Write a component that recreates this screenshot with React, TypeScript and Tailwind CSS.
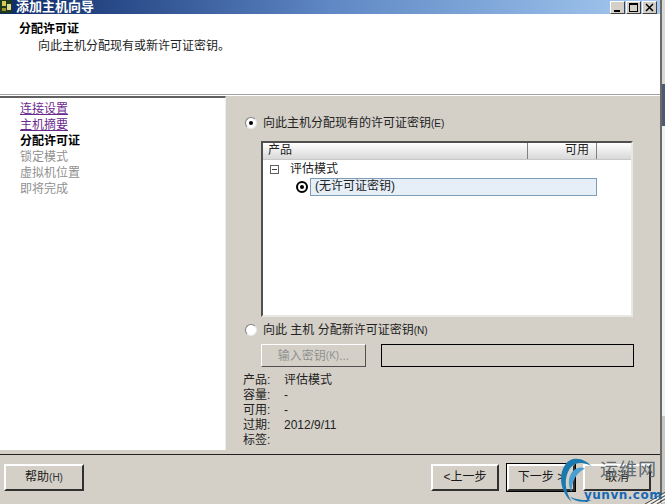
const font = "font-['Liberation_Sans','Noto_Sans_CJK_SC',sans-serif]";

function WinButton({ children }: { children: React.ReactNode }) {
  return (
    <div className="w-[15px] h-[13px] flex items-center justify-center bg-[#d4d0c8] border border-t-white border-l-white border-r-[#404040] border-b-[#404040]">
      {children}
    </div>
  );
}

function Radio({ checked }: { checked?: boolean }) {
  return (
    <span className="w-[12px] h-[12px] rounded-full bg-white border border-[#808080] border-r-[#e8e8e8] border-b-[#e8e8e8] flex items-center justify-center">
      {checked && <span className="w-[4px] h-[4px] rounded-full bg-black" />}
    </span>
  );
}

function Button({ label, hotkey, className }: { label: string; hotkey?: string; className: string }) {
  return (
    <div className={`h-[27px] flex items-center justify-center text-[12px] text-[#1a1a1a] bg-[#d4d0c8] border-2 border-t-white border-l-white border-r-[#303030] border-b-[#303030] ${className}`}>
      {label}
      {hotkey && <span className="text-[10px] text-[#333]">{hotkey}</span>}
    </div>
  );
}

function Info({ k, v }: { k: string; v?: string }) {
  return (
    <div className="flex h-[15px] items-center text-[12px] text-[#222]">
      <span className="w-[41px]">{k}</span>
      <span>{v}</span>
    </div>
  );
}

export default function App() {
  return (
    <div className={`relative w-[665px] h-[504px] overflow-hidden bg-[#d4d0c8] flex ${font}`}>
      <div className="w-[662px] flex flex-col border-r-2 border-[#6a6a6a]">
        {/* title bar */}
        <div className="h-[14px] flex items-center justify-between bg-gradient-to-r from-[#0f2a68] via-[#5f88c4] to-[#a6caf0]">
          <div className="flex items-center">
            <svg width="13" height="14" viewBox="0 0 13 14" className="mr-[3px]">
              <rect x="0" y="0" width="12" height="13" fill="#1d3a1d" />
              <rect x="2" y="1" width="4" height="5" fill="#d8c860" />
              <rect x="7" y="4" width="4" height="6" fill="#e0d890" />
              <rect x="2" y="8" width="4" height="3" fill="#a09030" />
            </svg>
            <span className="text-[13px] leading-[14px] font-bold text-white">添加主机向导</span>
          </div>
          <div className="flex gap-[1px] mr-[3px]">
            <WinButton><span className="block w-[6px] h-[2px] bg-black mt-[7px] mr-[2px]" /></WinButton>
            <WinButton><span className="block w-[9px] h-[9px] border border-black border-t-2" /></WinButton>
            <WinButton>
              <svg width="9" height="9" viewBox="0 0 9 9"><path d="M1 1L8 8M8 1L1 8" stroke="#000" strokeWidth="1.5" /></svg>
            </WinButton>
          </div>
        </div>

        {/* header */}
        <div className="h-[81px] bg-white pl-[19px] pt-[7px] border-b border-[#a0a0a0]">
          <div className="text-[12px] leading-[17px] font-bold text-black">分配许可证</div>
          <div className="pl-[19px] text-[12px] leading-[16px] text-[#222]">向此主机分配现有或新许可证密钥。</div>
        </div>

        <div className="flex-1 flex border-t border-white">
          {/* steps */}
          <div className="w-[226px] h-[354px] bg-white border-t-2 border-t-[#606060] border-r border-r-[#eeeeee] pl-[20px] pt-[3px] text-[12px] leading-[16px]">
            <div className="text-[#6b2a8e] underline">连接设置</div>
            <div className="text-[#6b2a8e] underline">主机摘要</div>
            <div className="font-bold text-black">分配许可证</div>
            <div className="text-[#909090]">锁定模式</div>
            <div className="text-[#909090]">虚拟机位置</div>
            <div className="text-[#909090]">即将完成</div>
          </div>

          {/* content */}
          <div className="flex-1 pl-[19px] pt-[19px] flex flex-col">
            <div className="flex items-center gap-[6px] h-[16px] text-[12px] text-[#222]">
              <Radio checked />
              <span>向此主机分配现有的许可证密钥<span className="text-[10px]">(E)</span></span>
            </div>

            <div className="ml-[16px] mt-[10px] w-[372px] h-[176px] bg-white border-2 border-t-[#505050] border-l-[#505050] border-r-[#e8e8e4] border-b-[#e8e8e4]">
              <div className="flex h-[17px] text-[12px] text-[#222] bg-gradient-to-b from-white to-[#d8d8d8] border-b border-[#c8c8c8]">
                <div className="w-[265px] pl-[5px] leading-[15px] border-r border-[#808080]">产品</div>
                <div className="w-[69px] pr-[7px] text-right leading-[15px] border-r border-[#808080]">可用</div>
              </div>
              <div className="flex items-center h-[16px] mt-[1px] text-[12px] text-[#222]">
                <span className="ml-[7px] w-[9px] h-[9px] border border-[#606060] flex items-center justify-center">
                  <span className="block w-[5px] h-[1px] bg-[#404040]" />
                </span>
                <span className="ml-[11px]">评估模式</span>
              </div>
              <div className="flex items-center mt-[1px]">
                <span className="ml-[33px] w-[12px] h-[12px] rounded-full border-2 border-black flex items-center justify-center">
                  <span className="block w-[4px] h-[4px] rounded-full bg-black" />
                </span>
                <div className="ml-[2px] w-[287px] h-[18px] bg-[#e6eef8] border border-[#7d9cb8] pl-[4px] text-[12px] leading-[15px] text-[#222]">(无许可证密钥)</div>
              </div>
            </div>

            <div className="flex items-center gap-[6px] h-[16px] mt-[5px] text-[12px] text-[#222]">
              <Radio />
              <span>向此 主机 分配新许可证密钥<span className="text-[10px]">(N)</span></span>
            </div>

            <div className="flex ml-[16px] mt-[6px] gap-[15px]">
              <div className="w-[105px] h-[23px] flex items-center justify-center text-[12px] text-[#909090] bg-[#d4d0c8] border border-t-white border-l-white border-r-[#505050] border-b-[#505050]">
                输入密钥<span className="text-[10px]">(K)</span>...
              </div>
              <div className="w-[253px] h-[23px] border border-black" />
            </div>

            <div className="mt-[5px] -ml-[2px]">
              <Info k="产品:" v="评估模式" />
              <Info k="容量:" v="-" />
              <Info k="可用:" v="-" />
              <Info k="过期:" v="2012/9/11" />
              <Info k="标签:" />
            </div>
          </div>
        </div>

        {/* footer */}
        <div className="h-[50px] border-t border-[#202020] flex items-center justify-between pl-[4px] pr-[9px] pb-[5px]">
          <Button label="帮助" hotkey="(H)" className="w-[80px]" />
          <div className="flex gap-[8px]">
            <Button label="<上一步" className="w-[68px]" />
            <Button label="下一步 >" className="w-[68px] outline outline-1 outline-black" />
            <Button label="取消" className="w-[68px]" />
          </div>
        </div>
      </div>

      {/* sliver of the window behind */}
      <div className="flex-1 flex flex-col">
        <div className="h-[84px] bg-[#d8d8d4]" />
        <div className="h-[42px] bg-[#4c5a78]" />
        <div className="h-[290px] bg-[#eef2f4]" />
        <div className="flex-1 bg-[#c8c8c4]" />
      </div>

      {/* watermark */}
      <div className="absolute left-[555px] top-[455px] w-[110px] h-[49px]">
        <svg width="110" height="49" viewBox="0 0 330 147" className="absolute left-0 top-0">
          <path d="M110 35C90 10 50 0 30 30C10 60 15 110 50 140C30 110 25 70 45 40C60 20 90 20 110 35Z" fill="#1a7ab0" />
          <path d="M90 40C65 30 45 50 42 75C40 90 45 105 50 110C50 90 55 60 90 40Z" fill="#4a9fd0" />
          <path d="M45 125C60 140 85 145 110 135C90 135 65 135 45 125Z" fill="#1a7ab0" />
          <path d="M270 147L330 112M288 147L330 122M306 147L330 132" stroke="#4a4a4a" strokeWidth="3" />
          <path d="M278 147L330 117M296 147L330 127M314 147L330 137" stroke="#ffffff" strokeWidth="3" />
        </svg>
        <span className="absolute left-[45px] top-[5px] text-[18px] leading-[20px] tracking-[1px] text-[#606a74]">运维网</span>
        <span className="absolute left-[29px] top-[33px] font-['DejaVu_Sans',sans-serif] text-[12px] leading-[14px] font-bold tracking-[0.5px] text-[#1668b4]">yunvn.com</span>
      </div>
    </div>
  );
}
